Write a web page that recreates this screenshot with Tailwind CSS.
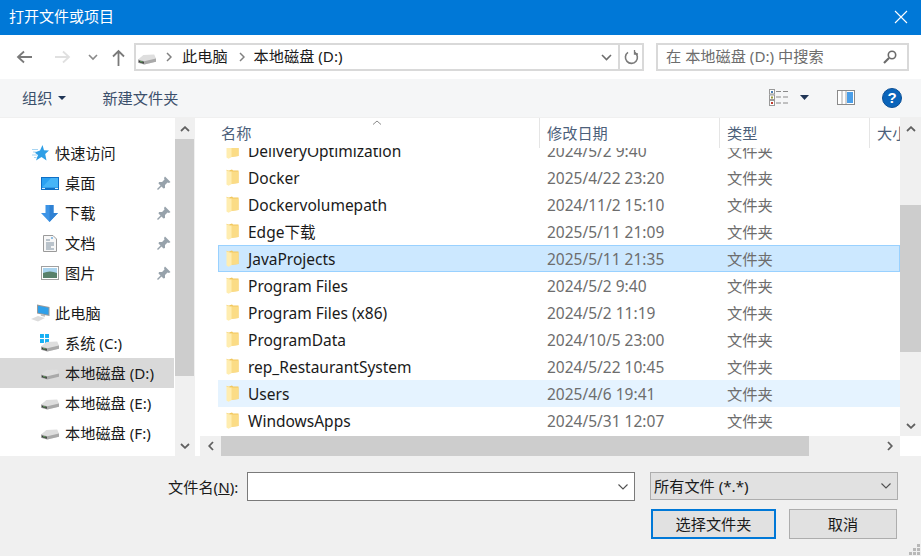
<!DOCTYPE html>
<html lang="zh-CN">
<head>
<meta charset="utf-8">
<script src="https://cdn.jsdelivr.net/npm/@tailwindcss/browser@4"></script>
<title>打开文件或项目</title>
</head>
<body class="w-[921px] h-[556px] overflow-hidden bg-[#f0f0f0] font-['Noto_Sans','Noto_Sans_CJK_SC',sans-serif] text-[15.2px] leading-[20px] text-[#1a1a1a]">
<svg class="hidden">
  <defs>
    <symbol id="folder" viewBox="0 0 13 17">
      <path d="M3 1.5 L6 0.5 L7 1.5 L12.5 1.5 L12.5 14 L3 15 Z" fill="#f2c75c"/>
      <path d="M5 2.5 L12.5 2.5 L12.5 14 L5 15 Z" fill="#fbdc86"/>
      <path d="M0.5 0.8 L5.5 2.5 L5.5 15.2 L2.5 16.7 L0.5 15.6 Z" fill="#ffedb0"/>
      <path d="M0.5 0.8 L5.5 2.5 L5.5 3.2 L0.5 1.6 Z" fill="#f6d888"/>
    </symbol>
    <symbol id="drive" viewBox="0 0 20 12">
      <path d="M0 6 L6 1 L18 0.5 L20 5 L20 8.5 L7 11.5 L0 9.5 Z" fill="#dedede"/>
      <path d="M0 6 L7 8 L20 5 L20 8.5 L7 11.5 L0 9.5 Z" fill="#a9a9a9"/>
      <path d="M1 7 L6.5 8.6 L6.5 10.7 L1 9.1 Z" fill="#3a3a3a"/>
      <path d="M2.5 8.2 L5 8.9" stroke="#6fd06a" stroke-width="0.9"/>
    </symbol>
    <symbol id="pin" viewBox="0 0 14 14">
      <path d="M8 0.5 L13.5 6 L12 7 L10.5 6.5 L8 9 L8 12 L6.5 12.5 L1.5 7.5 L2 6 L5 6 L7.5 3.5 L7 2 Z" fill="#97a2ab"/>
      <path d="M4.5 9.5 L0.5 13.5" stroke="#97a2ab" stroke-width="1.4"/>
    </symbol>
  </defs>
</svg>

<!-- Title bar -->
<header class="h-[35px] bg-[#0078d7] flex items-center justify-between pl-[9px] pr-[13px] pb-[3px] text-white text-[15px]">
  <span>打开文件或项目</span>
  <svg class="w-[14px] h-[14px] mt-[2px]" viewBox="0 0 14 14" fill="none" stroke="#fff" stroke-width="1.1"><path d="M1 1 L13 13 M13 1 L1 13"/></svg>
</header>

<!-- Navigation row -->
<div class="h-[44px] bg-white flex items-center pl-[16px] pr-[12px]">
  <svg class="w-[17px] h-[14px]" viewBox="0 0 17 14" fill="none" stroke="#7a7a7a" stroke-width="1.8"><path d="M16 7 H2 M8 1.5 L2 7 L8 12.5"/></svg>
  <svg class="w-[17px] h-[14px] ml-[21px]" viewBox="0 0 17 14" fill="none" stroke="#e0e0e0" stroke-width="1.8"><path d="M1 7 H15 M9 1.5 L15 7 L9 12.5"/></svg>
  <svg class="w-[10px] h-[7px] ml-[17px]" viewBox="0 0 10 7" fill="none" stroke="#8a8a8a" stroke-width="1.6"><path d="M1 1 L5 5 L9 1"/></svg>
  <svg class="w-[13px] h-[17px] ml-[14px]" viewBox="0 0 13 17" fill="none" stroke="#7a7a7a" stroke-width="1.8"><path d="M6.5 17 V2 M1 7.5 L6.5 2 L12 7.5"/></svg>
  <div class="ml-[9px] w-[510px] h-[28px] border-2 border-[#d9d9d9] flex items-center bg-white">
    <svg class="w-[18px] h-[11px] ml-[2px] mt-[4px]" viewBox="0 0 20 12"><use href="#drive"/></svg>
    <svg class="w-[6px] h-[10px] ml-[10px]" viewBox="0 0 6 10" fill="none" stroke="#808080" stroke-width="1.5"><path d="M1 1 L5 5 L1 9"/></svg>
    <span class="ml-[10px] -translate-y-px">此电脑</span>
    <svg class="w-[6px] h-[10px] ml-[11px]" viewBox="0 0 6 10" fill="none" stroke="#808080" stroke-width="1.5"><path d="M1 1 L5 5 L1 9"/></svg>
    <span class="ml-[9px] -translate-y-px">本地磁盘 (D:)</span>
    <svg class="w-[11px] h-[7px] ml-auto mr-[6px]" viewBox="0 0 11 7" fill="none" stroke="#6d6d6d" stroke-width="1.6"><path d="M1 1 L5.5 5.5 L10 1"/></svg>
    <div class="w-[24px] h-full border-l-2 border-[#d9d9d9] flex items-center justify-center">
      <svg class="w-[15px] h-[15px]" viewBox="0 0 15 15" fill="none" stroke="#7a7a7a" stroke-width="1.6"><path d="M10.5 2.2 A6 6 0 1 1 4 2.4"/><path d="M10.5 0 V4 H14" stroke-width="1.3"/></svg>
    </div>
  </div>
  <div class="ml-[12px] w-[253px] h-[28px] border-2 border-[#d9d9d9] flex items-center justify-between pl-[8px] pr-[10px] text-[#6d6d6d]">
    <span class="-translate-y-px">在 本地磁盘 (D:) 中搜索</span>
    <svg class="w-[14px] h-[14px]" viewBox="0 0 14 14" fill="none" stroke="#6b6b6b"><circle cx="9" cy="5" r="3.7" stroke-width="1.6"/><path d="M6 8 L1 13" stroke-width="2.2"/></svg>
  </div>
</div>

<!-- Toolbar -->
<div class="h-[39px] bg-[#f5f6f7] flex items-center pl-[22px] pr-[19px] pb-px text-[#3b4f6b] border-b border-[#f0f0f0]">
  <span>组织</span>
  <svg class="w-[8px] h-[4px] ml-[6px]" viewBox="0 0 8 4" fill="#1f3556"><path d="M0 0 H8 L4 4 Z"/></svg>
  <span class="ml-[36px]">新建文件夹</span>
  <svg class="w-[19px] h-[17px] ml-auto" viewBox="0 0 19 17">
    <rect x="0.5" y="0.5" width="5" height="4.5" fill="#fff" stroke="#999"/><rect x="2" y="2" width="2" height="2" fill="#4a7fb5"/>
    <rect x="0.5" y="6" width="5" height="4.5" fill="#fff" stroke="#999"/><rect x="2" y="7.5" width="2" height="2" fill="#9a9a3c"/>
    <rect x="0.5" y="11.5" width="5" height="5" fill="#fff" stroke="#999"/><rect x="2" y="13" width="2" height="2" fill="#c0392b"/>
    <path d="M7 2.5 H12 M14 2.5 H19 M7 8 H12 M14 8 H19 M7 14 H12 M14 14 H19" stroke="#8a8a8a" stroke-width="1"/>
  </svg>
  <svg class="w-[9px] h-[5px] ml-[12px]" viewBox="0 0 9 5" fill="#1f3556"><path d="M0 0 H9 L4.5 5 Z"/></svg>
  <svg class="w-[18px] h-[15px] ml-[28px]" viewBox="0 0 18 15">
    <rect x="0.5" y="0.5" width="17" height="14" fill="#fff" stroke="#8a8a8a"/>
    <rect x="10" y="2" width="6" height="11" fill="#4a9ee8"/>
    <path d="M5 1 V14 M9 1 V14" stroke="#a8a8a8"/>
  </svg>
  <div class="w-[20px] h-[20px] ml-[27px] rounded-full bg-[#0a64ba] border border-[#0a4f96] flex items-center justify-center text-white font-['Liberation_Sans',sans-serif] font-bold text-[15px] leading-none">?</div>
</div>

<!-- Main area -->
<div class="h-[338px] flex bg-white relative">
  <!-- Navigation pane -->
  <nav class="w-[174px] shrink-0 pt-[20px]">
    <div class="h-[30px] flex items-center pl-[32px] gap-[6px]">
      <svg class="w-[17px] h-[16px]" viewBox="0 0 17 16"><path d="M10.5 0 L12 5.3 L17 5.6 L13.2 9 L14.5 15.5 L9.5 12 L4 15.5 L6 10 L2.5 7.5 L8 5.5 Z" fill="#2f9fe6"/><path d="M0 4.5 H6 M1 7 H4 M0 10 H5 M2 12.5 H4.5" stroke="#a8d5f2"/></svg>
      <span>快速访问</span>
    </div>
    <div class="h-[30px] flex items-center pl-[41px] pr-[3px]">
      <svg class="w-[18px] h-[13px] mr-[6px]" viewBox="0 0 18 13"><rect width="18" height="13" fill="#0f6fc6"/><path d="M1 1 H17 V10.5 H1 Z" fill="#2aa1f2"/><path d="M1 10.5 L10 1 H17 V10.5 Z" fill="#46b4f7"/><path d="M1 11.5 H4 M14 11.5 H17" stroke="#d9eefc"/></svg>
      <span>桌面</span>
      <svg class="w-[14px] h-[14px] ml-auto" viewBox="0 0 14 14"><use href="#pin"/></svg>
    </div>
    <div class="h-[30px] flex items-center pl-[41px] pr-[3px]">
      <svg class="w-[17px] h-[17px] mr-[7px]" viewBox="0 0 17 17"><path d="M4.5 0 H12.5 V8 H17 L8.5 17 L0 8 H4.5 Z" fill="#3d94e6"/><path d="M8.5 0 H12.5 V8 H17 L8.5 17 Z" fill="#2f81d3"/></svg>
      <span>下载</span>
      <svg class="w-[14px] h-[14px] ml-auto" viewBox="0 0 14 14"><use href="#pin"/></svg>
    </div>
    <div class="h-[30px] flex items-center pl-[43px] pr-[3px]">
      <svg class="w-[14px] h-[17px] mr-[8px]" viewBox="0 0 14 17" fill="none"><path d="M0.5 0.5 H10 L13.5 4 V16.5 H0.5 Z" fill="#f7f7f7" stroke="#9a9a9a"/><path d="M3 5 H7 M3 8 H11 M3 10 H11 M3 12 H8 M3 14 H11" stroke="#7d8f9f"/><path d="M8 3 H10" stroke="#2e8bd6"/></svg>
      <span>文档</span>
      <svg class="w-[14px] h-[14px] ml-auto" viewBox="0 0 14 14"><use href="#pin"/></svg>
    </div>
    <div class="h-[30px] flex items-center pl-[41px] pr-[3px]">
      <svg class="w-[18px] h-[14px] mr-[6px]" viewBox="0 0 18 14"><rect x="0.5" y="0.5" width="17" height="13" fill="#fff" stroke="#a0a0a0"/><rect x="2" y="2" width="14" height="5" fill="#a9d3ee"/><path d="M2 7 Q9 4 16 7 V12 H2 Z" fill="#57806a"/></svg>
      <span>图片</span>
      <svg class="w-[14px] h-[14px] ml-auto" viewBox="0 0 14 14"><use href="#pin"/></svg>
    </div>
    <div class="h-[30px] mt-[10px] flex items-center pl-[31px] gap-[5px]">
      <svg class="w-[19px] h-[18px]" viewBox="0 0 19 18"><path d="M6 0.5 L18.5 3 V12 L6 9.5 Z" fill="#9a9a9a"/><path d="M7 1.7 L17.5 3.8 V10.8 L7 8.7 Z" fill="#2fa0ea"/><path d="M0 15 L7 12 L14 14 L7 17.5 Z" fill="#dcdcdc"/><path d="M10 11 L14 12" stroke="#bdbdbd" stroke-width="1.5"/></svg>
      <span>此电脑</span>
    </div>
    <div class="h-[30px] flex items-center pl-[40px]">
      <span class="relative w-[19px] h-[16px] mr-[6px]">
        <svg class="absolute left-0 -top-px w-[9px] h-[9px]" viewBox="0 0 8 8" fill="#16b0f4"><rect width="3.5" height="3.5"/><rect x="4.5" width="3.5" height="3.5"/><rect y="4.5" width="3.5" height="3.5"/><rect x="4.5" y="4.5" width="3.5" height="3.5"/></svg>
        <svg class="absolute left-px -bottom-px w-[18px] h-[11px]" viewBox="0 0 20 12"><use href="#drive"/></svg>
      </span>
      <span>系统 (C:)</span>
    </div>
    <div class="h-[30px] flex items-center pl-[41px] bg-[#d9d9d9]">
      <svg class="w-[18px] h-[11px] mr-[6px] mt-[3px]" viewBox="0 0 20 12"><use href="#drive"/></svg>
      <span>本地磁盘 (D:)</span>
    </div>
    <div class="h-[30px] flex items-center pl-[41px]">
      <svg class="w-[18px] h-[11px] mr-[6px] mt-[3px]" viewBox="0 0 20 12"><use href="#drive"/></svg>
      <span>本地磁盘 (E:)</span>
    </div>
    <div class="h-[30px] flex items-center pl-[41px]">
      <svg class="w-[18px] h-[11px] mr-[6px] mt-[3px]" viewBox="0 0 20 12"><use href="#drive"/></svg>
      <span>本地磁盘 (F:)</span>
    </div>
  </nav>

  <!-- Nav scrollbar -->
  <div class="ml-px w-[19px] shrink-0 bg-[#f0f0f0] flex flex-col">
    <div class="h-[21px] flex items-center justify-center">
      <svg class="w-[10px] h-[6px]" viewBox="0 0 10 6" fill="none" stroke="#606060" stroke-width="1.8"><path d="M1 5 L5 1.2 L9 5"/></svg>
    </div>
    <div class="h-[237px] bg-[#cdcdcd]"></div>
    <div class="mt-auto h-[20px] flex items-center justify-center">
      <svg class="w-[10px] h-[6px]" viewBox="0 0 10 6" fill="none" stroke="#606060" stroke-width="1.8"><path d="M1 1 L5 4.8 L9 1"/></svg>
    </div>
  </div>
  <div class="w-[6px] shrink-0 bg-white border-l border-[#f0f0f0]"></div>

  <!-- File pane -->
  <section class="w-[721px] shrink-0 flex flex-col">
    <div class="flex flex-1 min-h-0">
      <div class="w-[700px] shrink-0 flex flex-col">
        <!-- Column header -->
        <div class="h-[30px] shrink-0 relative flex text-[#4c607a] leading-[30px] overflow-hidden">
          <svg class="absolute left-[172px] top-[2px] w-[10px] h-[5px]" viewBox="0 0 10 5" fill="none" stroke="#8a8a8a"><path d="M1 4.5 L5 1 L9 4.5"/></svg>
          <div class="w-[340px] shrink-0 pl-[21px] border-r border-[#e5e5e5]">名称</div>
          <div class="w-[180px] shrink-0 pl-[7px] border-r border-[#e5e5e5]">修改日期</div>
          <div class="w-[150px] shrink-0 pl-[7px] border-r border-[#e5e5e5]">类型</div>
          <div class="shrink-0 pl-[7px] whitespace-nowrap">大小</div>
        </div>
        <!-- Rows -->
        <div class="flex-1 min-h-0 overflow-hidden text-[15.5px]">
          <div class="-mt-[11px]">
            <div class="h-[27px] ml-[18px] flex items-center"><svg class="w-[13px] h-[17px] ml-[8px]" viewBox="0 0 13 17"><use href="#folder"/></svg><span class="w-[308px] pl-[9px]">DeliveryOptimization</span><span class="w-[180px] text-[#6d6d6d]">2024/5/2 9:40</span><span class="text-[#6d6d6d] text-[15.3px]">文件夹</span></div>
            <div class="h-[27px] ml-[18px] flex items-center"><svg class="w-[13px] h-[17px] ml-[8px]" viewBox="0 0 13 17"><use href="#folder"/></svg><span class="w-[308px] pl-[9px]">Docker</span><span class="w-[180px] text-[#6d6d6d]">2025/4/22 23:20</span><span class="text-[#6d6d6d] text-[15.3px]">文件夹</span></div>
            <div class="h-[27px] ml-[18px] flex items-center"><svg class="w-[13px] h-[17px] ml-[8px]" viewBox="0 0 13 17"><use href="#folder"/></svg><span class="w-[308px] pl-[9px]">Dockervolumepath</span><span class="w-[180px] text-[#6d6d6d]">2024/11/2 15:10</span><span class="text-[#6d6d6d] text-[15.3px]">文件夹</span></div>
            <div class="h-[27px] ml-[18px] flex items-center"><svg class="w-[13px] h-[17px] ml-[8px]" viewBox="0 0 13 17"><use href="#folder"/></svg><span class="w-[308px] pl-[9px]">Edge下载</span><span class="w-[180px] text-[#6d6d6d]">2025/5/11 21:09</span><span class="text-[#6d6d6d] text-[15.3px]">文件夹</span></div>
            <div class="h-[27px] ml-[18px] flex items-center bg-[#cce8ff] outline outline-1 -outline-offset-1 outline-[#99d1ff]"><svg class="w-[13px] h-[17px] ml-[8px]" viewBox="0 0 13 17"><use href="#folder"/></svg><span class="w-[308px] pl-[9px]">JavaProjects</span><span class="w-[180px] text-[#6d6d6d]">2025/5/11 21:35</span><span class="text-[#6d6d6d] text-[15.3px]">文件夹</span></div>
            <div class="h-[27px] ml-[18px] flex items-center"><svg class="w-[13px] h-[17px] ml-[8px]" viewBox="0 0 13 17"><use href="#folder"/></svg><span class="w-[308px] pl-[9px]">Program Files</span><span class="w-[180px] text-[#6d6d6d]">2024/5/2 9:40</span><span class="text-[#6d6d6d] text-[15.3px]">文件夹</span></div>
            <div class="h-[27px] ml-[18px] flex items-center"><svg class="w-[13px] h-[17px] ml-[8px]" viewBox="0 0 13 17"><use href="#folder"/></svg><span class="w-[308px] pl-[9px]">Program Files (x86)</span><span class="w-[180px] text-[#6d6d6d]">2024/5/2 11:19</span><span class="text-[#6d6d6d] text-[15.3px]">文件夹</span></div>
            <div class="h-[27px] ml-[18px] flex items-center"><svg class="w-[13px] h-[17px] ml-[8px]" viewBox="0 0 13 17"><use href="#folder"/></svg><span class="w-[308px] pl-[9px]">ProgramData</span><span class="w-[180px] text-[#6d6d6d]">2024/10/5 23:00</span><span class="text-[#6d6d6d] text-[15.3px]">文件夹</span></div>
            <div class="h-[27px] ml-[18px] flex items-center"><svg class="w-[13px] h-[17px] ml-[8px]" viewBox="0 0 13 17"><use href="#folder"/></svg><span class="w-[308px] pl-[9px]">rep_RestaurantSystem</span><span class="w-[180px] text-[#6d6d6d]">2024/5/22 10:45</span><span class="text-[#6d6d6d] text-[15.3px]">文件夹</span></div>
            <div class="h-[27px] ml-[18px] flex items-center bg-[#e5f3ff]"><svg class="w-[13px] h-[17px] ml-[8px]" viewBox="0 0 13 17"><use href="#folder"/></svg><span class="w-[308px] pl-[9px]">Users</span><span class="w-[180px] text-[#6d6d6d]">2025/4/6 19:41</span><span class="text-[#6d6d6d] text-[15.3px]">文件夹</span></div>
            <div class="h-[27px] ml-[18px] flex items-center"><svg class="w-[13px] h-[17px] ml-[8px]" viewBox="0 0 13 17"><use href="#folder"/></svg><span class="w-[308px] pl-[9px]">WindowsApps</span><span class="w-[180px] text-[#6d6d6d]">2024/5/31 12:07</span><span class="text-[#6d6d6d] text-[15.3px]">文件夹</span></div>
          </div>
        </div>
      </div>
      <!-- Vertical scrollbar -->
      <div class="w-[21px] shrink-0 bg-[#f0f0f0] flex flex-col">
        <div class="h-[21px] flex items-center justify-center">
          <svg class="w-[10px] h-[6px]" viewBox="0 0 10 6" fill="none" stroke="#606060" stroke-width="1.8"><path d="M1 5 L5 1.2 L9 5"/></svg>
        </div>
        <div class="h-[147px] mt-[66px] bg-[#cdcdcd]"></div>
        <div class="mt-auto h-[20px] flex items-center justify-center">
          <svg class="w-[10px] h-[6px]" viewBox="0 0 10 6" fill="none" stroke="#606060" stroke-width="1.8"><path d="M1 1 L5 4.8 L9 1"/></svg>
        </div>
      </div>
    </div>
    <!-- Horizontal scrollbar -->
    <div class="h-[20px] shrink-0 flex">
      <div class="w-[700px] bg-[#f0f0f0] flex items-center">
        <div class="w-[21px] flex justify-center">
          <svg class="w-[6px] h-[10px]" viewBox="0 0 6 10" fill="none" stroke="#606060" stroke-width="1.8"><path d="M5 1 L1.2 5 L5 9"/></svg>
        </div>
        <div class="w-[588px] h-full bg-[#cdcdcd]"></div>
        <div class="ml-auto w-[21px] flex justify-center">
          <svg class="w-[6px] h-[10px]" viewBox="0 0 6 10" fill="none" stroke="#606060" stroke-width="1.8"><path d="M1 1 L4.8 5 L1 9"/></svg>
        </div>
      </div>
    </div>
  </section>
</div>

<!-- Footer -->
<footer class="h-[100px] relative pt-[16px] pl-[168px]">
  <div class="flex items-center">
    <span class="w-[79px]">文件名(<span class="underline">N</span>):</span>
    <div class="w-[388px] h-[29px] bg-white border border-[#7a7a7a] flex items-center justify-end pr-[6px]">
      <svg class="w-[10px] h-[6px]" viewBox="0 0 10 6" fill="none" stroke="#505050" stroke-width="1.1"><path d="M0.5 0.5 L5 5 L9.5 0.5"/></svg>
    </div>
    <div class="ml-[15px] w-[248px] h-[28px] bg-[#e1e1e1] border border-[#adadad] flex items-center justify-between pl-[3px] pr-[6px] self-start">
      <span>所有文件 (*.*)</span>
      <svg class="w-[10px] h-[6px]" viewBox="0 0 10 6" fill="none" stroke="#505050" stroke-width="1.1"><path d="M0.5 0.5 L5 5 L9.5 0.5"/></svg>
    </div>
  </div>
  <div class="flex mt-[8px] pl-[483px]">
    <div class="w-[125px] h-[30px] bg-[#e1e1e1] border-2 border-[#0078d7] flex items-center justify-center">选择文件夹</div>
    <div class="ml-[13px] w-[108px] h-[30px] bg-[#e1e1e1] border border-[#adadad] flex items-center justify-center">取消</div>
  </div>
  <svg class="absolute right-[1px] bottom-[1px] w-[11px] h-[11px]" viewBox="0 0 11 11" fill="#b8b8b8"><rect x="8" y="0" width="3" height="3"/><rect x="4" y="4" width="3" height="3"/><rect x="8" y="4" width="3" height="3"/><rect x="0" y="8" width="3" height="3"/><rect x="4" y="8" width="3" height="3"/><rect x="8" y="8" width="3" height="3"/></svg>
</footer>
</body>
</html>
